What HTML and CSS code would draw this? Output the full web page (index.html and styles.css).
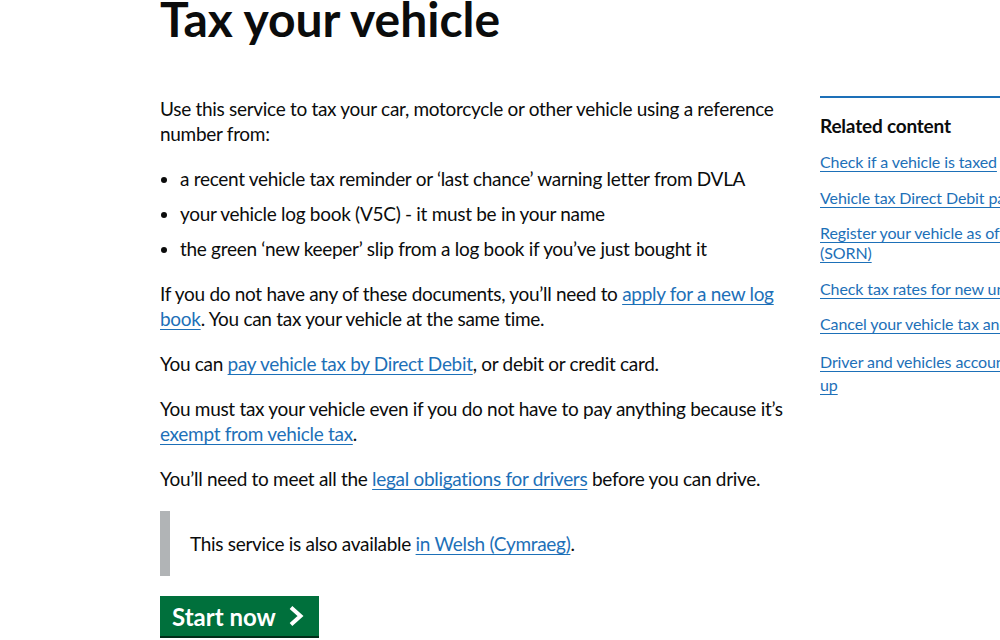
FILE: index.html
```html
<!DOCTYPE html>
<html lang="en">
<head>
<meta charset="utf-8">
<title>Tax your vehicle - GOV.UK</title>
<link rel="stylesheet" href="styles.css">
</head>
<body>
<div class="container">
  <h1 class="title">Tax your vehicle</h1>
  <div class="row">
    <main class="main">
      <p class="body">Use this service to tax your car, motorcycle or other vehicle using a reference number from:</p>
      <ul class="list">
        <li>a recent vehicle tax reminder or ‘last chance’ warning letter from DVLA</li>
        <li>your vehicle log book (V5C) - it must be in your name</li>
        <li>the green ‘new keeper’ slip from a log book if you’ve just bought it</li>
      </ul>
      <p class="body">If you do not have any of these documents, you’ll need to <a class="link" href="#">apply for a new log book</a>. You can tax your vehicle at the same time.</p>
      <p class="body">You can <a class="link" href="#">pay vehicle tax by Direct Debit</a>, or debit or credit card.</p>
      <p class="body">You must tax your vehicle even if you do not have to pay anything because it’s <a class="link" href="#">exempt from vehicle tax</a>.</p>
      <p class="body">You’ll need to meet all the <a class="link" href="#">legal obligations for drivers</a> before you can drive.</p>
      <div class="inset">
        <p class="inset-text">This service is also available <a class="link" href="#">in Welsh (Cymraeg)</a>.</p>
      </div>
      <a class="start" href="#">Start now
        <svg class="chev" width="17" height="22" viewBox="0 0 17 22" aria-hidden="true"><polyline points="3,2.5 12.5,11 3,19.5" fill="none" stroke="#fff" stroke-width="4" stroke-linecap="butt" stroke-linejoin="miter"/></svg>
      </a>
    </main>
    <aside class="side">
      <h2 class="side-title">Related content</h2>
      <ul class="side-list">
        <li class="side-item"><a class="side-link" href="#">Check if a vehicle is taxed</a></li>
        <li class="side-item"><a class="side-link" href="#">Vehicle tax Direct Debit payments</a></li>
        <li class="side-item"><a class="side-link" href="#">Register your vehicle as off the road (SORN)</a></li>
        <li class="side-item side-item-one"><a class="side-link" href="#">Check tax rates for new unregistered vehicles</a></li>
        <li class="side-item"><a class="side-link" href="#">Cancel your vehicle tax and get a refund</a></li>
        <li class="side-item side-item-tall"><a class="side-link" href="#">Driver and vehicles account: sign in or set up</a></li>
      </ul>
    </aside>
  </div>
</div>
</body>
</html>
```

FILE: styles.css
```css
html, body {
  margin: 0;
  padding: 0;
  overflow: hidden;
  background: #ffffff;
}
body {
  font-family: Lato, "Liberation Sans", sans-serif;
  color: #0b0c0c;
  width: 1000px;
  height: 640px;
}
.container {
  padding-left: 160px;
  width: 1300px;
}
.title {
  margin: 0;
  height: 96px;
  font-size: 48px;
  line-height: 38px;
  font-weight: 700;
  letter-spacing: 0;
}
.row {
  display: flex;
  gap: 30px;
}
.main {
  width: 630px;
  flex: none;
}
.body {
  margin: 0 0 20px;
  font-size: 19px;
  line-height: 25px;
  letter-spacing: -0.3px;
}
.link {
  color: #1d70b8;
  text-decoration: underline;
  text-decoration-thickness: 1px;
  text-underline-offset: 3px;
}
.list {
  margin: 0 0 20px;
  padding-left: 20px;
  font-size: 19px;
  line-height: 25px;
  letter-spacing: -0.3px;
}
.list li {
  margin-bottom: 10px;
}
.list li:last-child {
  margin-bottom: 0;
}
.inset {
  border-left: 10px solid #b1b4b6;
  padding: 20px 0 20px 20px;
  margin-bottom: 20px;
}
.inset-text {
  margin: 0;
  font-size: 19px;
  line-height: 25px;
  letter-spacing: -0.3px;
}
.start {
  display: inline-flex;
  align-items: center;
  gap: 12px;
  height: 40px;
  padding: 0 14px 0 12px;
  background: #00703c;
  color: #ffffff;
  font-size: 24px;
  font-weight: 700;
  text-decoration: none;
  box-shadow: 0 2px 0 #002d18;
}
.side {
  width: 290px;
  flex: none;
  border-top: 2px solid #1d70b8;
  padding-top: 15px;
}
.side-title {
  margin: 0 0 14px;
  font-size: 19px;
  line-height: 25px;
  font-weight: 700;
  letter-spacing: -0.2px;
}
.side-list {
  list-style: none;
  margin: 0;
  padding: 0;
  font-size: 16px;
  line-height: 20px;
  letter-spacing: -0.1px;
}
.side-item {
  margin-bottom: 15.5px;
}
.side-item-one {
  white-space: nowrap;
}
.side-item-tall {
  line-height: 23px;
  margin-top: 1px;
}
.side-link {
  color: #1d70b8;
  text-decoration: underline;
  text-decoration-thickness: 1px;
  text-underline-offset: 3px;
}
```
